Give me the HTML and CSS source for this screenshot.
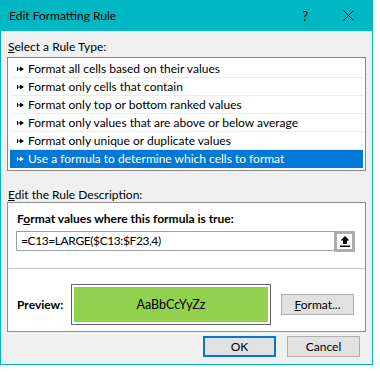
FILE: index.html
```html
<!DOCTYPE html>
<html lang="en">
<head>
<meta charset="UTF-8">
<meta name="viewport" content="width=device-width, initial-scale=1.0">
<title>Edit Formatting Rule</title>
<link rel="stylesheet" href="styles.css">
</head>
<body>
    <div class="dialog">
        <div class="titlebar">
            <span class="title">Edit Formatting Rule</span>
            <span class="help">?</span>
            <svg class="close" width="11" height="11" viewBox="0 0 11 11">
                <path d="M0.5 0.5L10.5 10.5M10.5 0.5L0.5 10.5" stroke="#000" stroke-width="1" fill="none"/>
            </svg>
        </div>
        <div class="content">
            <div class="label"><u>S</u>elect a Rule Type:</div>
            <ul class="rules">
                <li><svg class="arrow" width="7" height="6" viewBox="0 0 7 6"><path d="M0 1h1v4H0zM1 2.5h3v1H1zM3 0.5l4 2.5L3 5.5z"/></svg>Format all cells based on their values</li>
                <li><svg class="arrow" width="7" height="6" viewBox="0 0 7 6"><path d="M0 1h1v4H0zM1 2.5h3v1H1zM3 0.5l4 2.5L3 5.5z"/></svg>Format only cells that contain</li>
                <li><svg class="arrow" width="7" height="6" viewBox="0 0 7 6"><path d="M0 1h1v4H0zM1 2.5h3v1H1zM3 0.5l4 2.5L3 5.5z"/></svg>Format only top or bottom ranked values</li>
                <li><svg class="arrow" width="7" height="6" viewBox="0 0 7 6"><path d="M0 1h1v4H0zM1 2.5h3v1H1zM3 0.5l4 2.5L3 5.5z"/></svg>Format only values that are above or below average</li>
                <li><svg class="arrow" width="7" height="6" viewBox="0 0 7 6"><path d="M0 1h1v4H0zM1 2.5h3v1H1zM3 0.5l4 2.5L3 5.5z"/></svg>Format only unique or duplicate values</li>
                <li class="selected"><svg class="arrow" width="7" height="6" viewBox="0 0 7 6"><path d="M0 1h1v4H0zM1 2.5h3v1H1zM3 0.5l4 2.5L3 5.5z"/></svg>Use a formula to determine which cells to format</li>
            </ul>
            <div class="label desc-label"><u>E</u>dit the Rule Description:</div>
            <div class="desc">
                <div class="desc-top">
                    <div class="desc-title">F<u>o</u>rmat values where this formula is true:</div>
                    <div class="formula-row">
                        <div class="formula">=C13=LARGE($C13:$F23,4)</div>
                        <div class="collapse-btn">
                            <svg width="10" height="11" viewBox="0 0 10 11"><path d="M5 0L9.5 4.5H7V8H3V4.5H0.5Z M0 9.5h10V11H0z"/></svg>
                        </div>
                    </div>
                </div>
                <div class="preview-row">
                    <span class="preview-label">Preview:</span>
                    <div class="preview-box">
                        <div class="preview-fill">AaBbCcYyZz</div>
                    </div>
                    <button class="btn format-btn"><u>F</u>ormat...</button>
                </div>
            </div>
            <div class="actions">
                <button class="btn ok">OK</button>
                <button class="btn">Cancel</button>
            </div>
        </div>
    </div>
</body>
</html>
```

FILE: styles.css
```css
body {
    margin: 0;
    background: #fff;
    font-family: Lato, "Open Sans", sans-serif;
    font-size: 12px;
    color: #000;
}
.dialog {
    width: 373px;
    height: 365px;
    box-sizing: border-box;
    border: 1px solid #00b7c3;
    border-top: none;
    background: #f0f0f0;
}
.titlebar {
    height: 31px;
    margin: 0 -1px;
    background: #00b7c3;
    display: flex;
    align-items: center;
    padding-left: 9px;
}
.title {
    flex: 1;
    font-size: 12px;
}
.help {
    font-size: 13px;
    margin-right: 35px;
}
.close {
    margin-right: 19px;
}
.content {
    padding: 8px 6px 0 6px;
}
.label {
    line-height: 16px;
    padding-left: 1px;
    margin-bottom: 2px;
}
.desc-label {
    line-height: 15px;
    margin: 16px 0 0 0;
}
.rules {
    list-style: none;
    margin: 0;
    padding: 2px 2px 2px 2px;
    background: #fff;
    border: 1px solid #828790;
}
.rules li {
    height: 17px;
    line-height: 17px;
    border-bottom: 1px solid #ebebeb;
    display: flex;
    align-items: center;
    padding-left: 7px;
    white-space: nowrap;
}
.rules li.selected {
    background: #0078d7;
    color: #fff;
    border-bottom-color: #0078d7;
}
.arrow {
    margin-right: 4px;
    fill: #000;
}
.selected .arrow {
    fill: #fff;
}
.desc {
    background: #fff;
    border: 1px solid #8d8d8d;
}
.desc-top {
    padding: 8px 10px 16px 8px;
    border-bottom: 1px solid #c8c8c8;
}
.desc-title {
    font-weight: bold;
    line-height: 16px;
    padding-left: 1px;
    margin-bottom: 4px;
}
.formula-row {
    display: flex;
    align-items: flex-start;
}
.formula {
    flex: 1;
    height: 20px;
    box-sizing: border-box;
    border: 1px solid #a0a0a0;
    border-right: none;
    padding-left: 4px;
    line-height: 18px;
    letter-spacing: -0.4px;
}
.collapse-btn {
    width: 21px;
    height: 21px;
    box-sizing: border-box;
    border: 3px solid #acacac;
    background: #fff;
    display: flex;
    align-items: center;
    justify-content: center;
}
.preview-row {
    display: flex;
    align-items: center;
    padding: 15px 11px 6px 9px;
}
.preview-label {
    font-weight: bold;
    width: 54px;
}
.preview-box {
    border: 1px solid #646464;
    padding: 2px;
    background: #fff;
}
.preview-fill {
    width: 194px;
    height: 35px;
    background: #92d050;
    line-height: 35px;
    text-align: center;
    font-size: 12.5px;
}
.btn {
    width: 73px;
    height: 21px;
    box-sizing: border-box;
    border: 1px solid #adadad;
    background: #e1e1e1;
    font-family: inherit;
    font-size: 12px;
    color: #000;
    padding: 0;
}
.format-btn {
    margin-left: 10px;
}
.actions {
    display: flex;
    justify-content: flex-end;
    gap: 11px;
    margin-top: 4px;
    padding-right: 6px;
}
.btn.ok {
    border: 2px solid #0078d7;
}
```
